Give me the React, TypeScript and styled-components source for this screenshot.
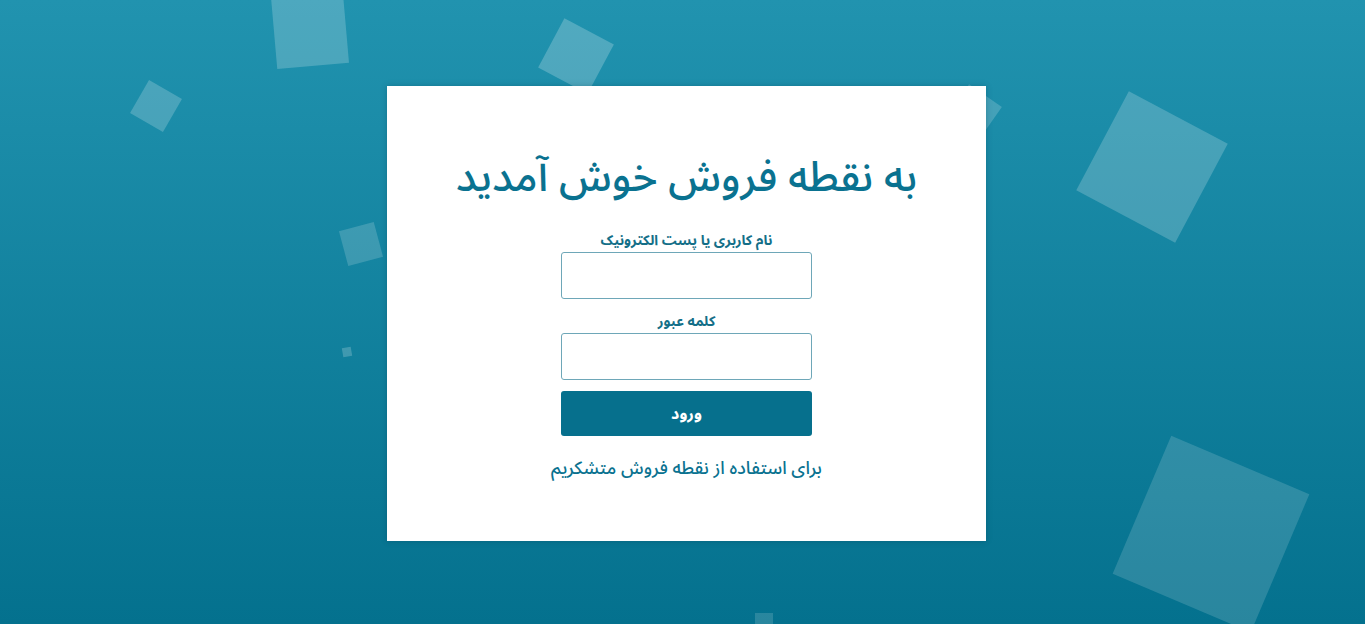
import React from "react";
import styled, { createGlobalStyle } from "styled-components";

const GlobalStyle = createGlobalStyle`
    html, body {
        margin: 0;
        padding: 0;
    }
    body {
        font-family: "Noto Sans Arabic", "DejaVu Sans", sans-serif;
        overflow: hidden;
    }
`;

const Page = styled.div`
    position: relative;
    width: 100vw;
    height: 624px;
    overflow: hidden;
    background: linear-gradient(to bottom, #2193af 0%, #04718e 100%);
    display: flex;
    justify-content: center;
    align-items: flex-start;
    padding: 86px 0 0 8px;
    box-sizing: border-box;
`;

const Bubbles = styled.div`
    position: absolute;
    inset: 0;
    z-index: 0;
`;

const Square = styled.div<{ $x: number; $y: number; $size: number; $rot: number; $alpha: number }>`
    position: absolute;
    left: ${(p) => p.$x}px;
    top: ${(p) => p.$y}px;
    width: ${(p) => p.$size}px;
    height: ${(p) => p.$size}px;
    transform: translate(-50%, -50%) rotate(${(p) => p.$rot}deg);
    background: rgba(255, 255, 255, ${(p) => p.$alpha});
`;

const Card = styled.form`
    position: relative;
    z-index: 1;
    width: 599px;
    height: 455px;
    background: #ffffff;
    box-shadow: 0 0 6px rgba(0, 40, 60, 0.25);
    display: flex;
    flex-direction: column;
    align-items: center;
    padding-top: 64px;
    box-sizing: border-box;
    direction: rtl;
`;

const Title = styled.h1`
    margin: 0 0 27px;
    font-size: 42px;
    line-height: 55px;
    font-weight: 500;
    color: #0a7290;
`;

const Field = styled.div`
    display: flex;
    flex-direction: column;
    align-items: center;
    gap: 3px;
    margin-bottom: 14px;
`;

const Label = styled.label`
    font-size: 14px;
    line-height: 17px;
    font-weight: 700;
    color: #146f88;
`;

const Input = styled.input`
    width: 251px;
    height: 47px;
    box-sizing: border-box;
    border: 1px solid #6ea7b8;
    border-radius: 3px;
    background: #fff;
    padding: 0 10px;
    font-family: inherit;
    font-size: 15px;
    outline: none;
`;

const Button = styled.button`
    width: 251px;
    height: 45px;
    margin-top: -3px;
    border: none;
    border-radius: 3px;
    background: #06708d;
    color: #fff;
    font-family: inherit;
    font-size: 16px;
    font-weight: 700;
    cursor: pointer;
`;

const Footer = styled.p`
    margin: 20px 0 0;
    font-size: 18px;
    line-height: 24px;
    font-weight: 500;
    color: #0a7290;
`;

const squares = [
    { x: 310, y: 30, size: 72, rot: -5, alpha: 0.2 },
    { x: 576, y: 56, size: 56, rot: 28, alpha: 0.22 },
    { x: 156, y: 106, size: 38, rot: 30, alpha: 0.2 },
    { x: 361, y: 244, size: 36, rot: -15, alpha: 0.17 },
    { x: 347, y: 352, size: 9, rot: -10, alpha: 0.2 },
    { x: 974, y: 112, size: 40, rot: 35, alpha: 0.18 },
    { x: 1152, y: 167, size: 112, rot: 28, alpha: 0.2 },
    { x: 1211, y: 534, size: 150, rot: 23, alpha: 0.15 },
    { x: 764, y: 622, size: 18, rot: 0, alpha: 0.15 },
];

export default function App() {
    return (
        <>
            <GlobalStyle />
            <Page>
                <Bubbles>
                    {squares.map((s, i) => (
                        <Square key={i} $x={s.x} $y={s.y} $size={s.size} $rot={s.rot} $alpha={s.alpha} />
                    ))}
                </Bubbles>
                <Card onSubmit={(e) => e.preventDefault()}>
                    <Title>به نقطه فروش خوش آمدید</Title>
                    <Field>
                        <Label htmlFor="user">نام کاربری یا پست الکترونیک</Label>
                        <Input id="user" type="text" />
                    </Field>
                    <Field>
                        <Label htmlFor="pass">کلمه عبور</Label>
                        <Input id="pass" type="password" />
                    </Field>
                    <Button type="submit">ورود</Button>
                    <Footer>برای استفاده از نقطه فروش متشکریم</Footer>
                </Card>
            </Page>
        </>
    );
}
